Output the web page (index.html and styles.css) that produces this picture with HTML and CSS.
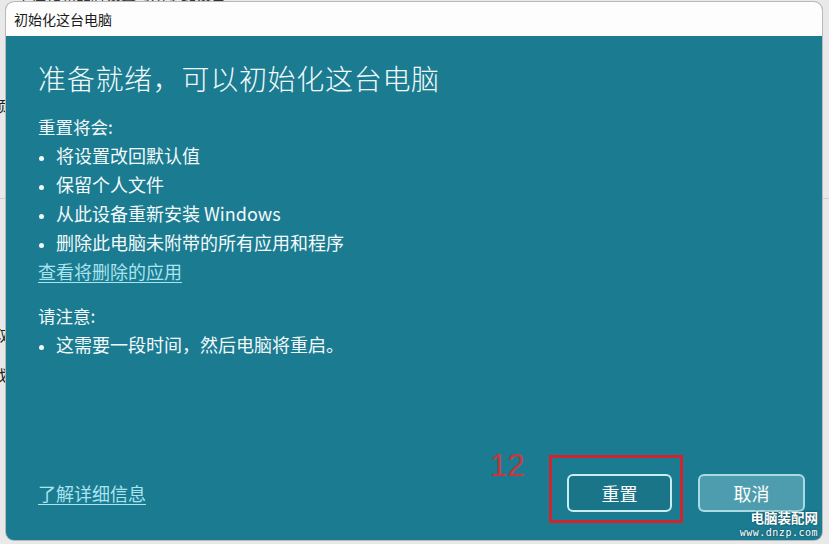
FILE: index.html
```html
<!DOCTYPE html>
<html>
<head>
  <title>初始化这台电脑</title>
  <link rel="stylesheet" href="styles.css">
</head>
<body>
  <div class="backdrop">
    <p class="back-line back-top">个性化和品牌设置可用于此设备</p>
    <p class="back-line back-a">项</p>
    <div class="back-rule"></div>
    <p class="back-line back-b">取</p>
    <p class="back-line back-c">找</p>
  </div>

  <div class="dialog">
    <div class="titlebar">初始化这台电脑</div>
    <div class="content">
      <h1 class="heading">准备就绪，可以初始化这台电脑</h1>
      <p class="text">重置将会:</p>
      <ul class="bullets">
        <li>将设置改回默认值</li>
        <li>保留个人文件</li>
        <li>从此设备重新安装 Windows</li>
        <li>删除此电脑未附带的所有应用和程序</li>
      </ul>
      <a class="link" href="#">查看将删除的应用</a>

      <p class="text note">请注意:</p>
      <ul class="bullets">
        <li>这需要一段时间，然后电脑将重启。</li>
      </ul>

      <div class="footer">
        <a class="link" href="#">了解详细信息</a>
        <div class="buttons">
          <div class="marked">
            <span class="mark-num">12</span>
            <span class="mark-box"></span>
            <button class="btn">重置</button>
          </div>
          <button class="btn btn-cancel">取消</button>
        </div>
      </div>
    </div>
    <div class="watermark">
      <span class="wm-name">电脑装配网</span>
      <span class="wm-url">www.dnzp.com</span>
    </div>
  </div>
</body>
</html>
```

FILE: styles.css
```css
body{
  margin: 0;
  width: 829px;
  height: 544px;
  overflow: hidden;
  background-color: #e9e9e9;
  font-family: "Noto Sans CJK SC", "Noto Sans", sans-serif;
  position: relative;
}

.backdrop{
  display: flex;
  flex-direction: column;
  color: #222;
  font-size: 15px;
}

.back-line{
  margin: 0;
  line-height: 20px;
}

.back-top{
  margin-top: -16px;
  padding-left: 16px;
  color: #333;
}

.back-a{
  margin-top: 92px;
  margin-left: -7px;
}

.back-rule{
  height: 1px;
  background-color: #cfcfcf;
  margin-top: 82px;
}

.back-b{
  margin-top: 126px;
  margin-left: -7px;
}

.back-c{
  margin-top: 20px;
  margin-left: -7px;
}

/* dialog sits over the page behind it */
.dialog{
  position: absolute;
  left: 6px;
  top: 2px;
  width: 816px;
  height: 538px;
  display: flex;
  flex-direction: column;
  border-radius: 8px;
  overflow: hidden;
  box-shadow: 0 0 0 1px #b9b9b9;
  background-color: #1b7b91;
}

.titlebar{
  height: 34px;
  flex-shrink: 0;
  background-color: #fdfdfd;
  color: #1b1b1b;
  font-size: 14px;
  line-height: 34px;
  padding-left: 8px;
}

.content{
  flex: 1;
  display: flex;
  flex-direction: column;
  align-items: flex-start;
  padding: 24px 17px 28px 32px;
  color: #f2fafb;
}

.heading{
  margin: 0 0 16px;
  font-size: 28px;
  line-height: 36px;
  font-weight: 300;
  letter-spacing: 0.7px;
}

.text{
  margin: 0;
  font-size: 17.5px;
  line-height: 29px;
}

.note{
  margin-top: 15px;
}

.bullets{
  list-style: none;
  margin: 0;
  padding: 0;
  font-size: 18px;
  line-height: 29px;
}

.bullets li::before{
  content: "";
  display: inline-block;
  width: 5px;
  height: 5px;
  margin: 0 12px 0 1px;
  border-radius: 50%;
  background-color: currentColor;
  vertical-align: middle;
}

.link{
  color: #a9e4ef;
  font-size: 18px;
  line-height: 29px;
  text-decoration: underline;
  text-underline-offset: 3px;
}

.footer{
  margin-top: auto;
  align-self: stretch;
  display: flex;
  align-items: center;
  justify-content: space-between;
}

.buttons{
  display: flex;
  gap: 26px;
}

.btn{
  width: 105px;
  height: 38px;
  border: 2px solid #c6eef4;
  border-radius: 6px;
  background-color: #1a7589;
  color: #ffffff;
  font-family: "Noto Sans CJK SC", sans-serif;
  font-size: 18px;
  cursor: pointer;
}

.btn-cancel{
  width: 107px;
  background-color: #4d9dae;
  border-color: #a9dbe4;
}

.marked{
  position: relative;
  display: flex;
}

.mark-box{
  position: absolute;
  top: -19px;
  left: -18px;
  right: -11px;
  bottom: -11px;
  border: 3px solid #d0252f;
}

.mark-num{
  position: absolute;
  left: -77px;
  top: -25px;
  color: #c9363d;
  font-family: "Liberation Sans", sans-serif;
  font-size: 31px;
  line-height: 34px;
}

.watermark{
  position: absolute;
  right: 4px;
  bottom: 1px;
  display: flex;
  flex-direction: column;
  align-items: flex-end;
  color: #ffffff;
  text-shadow: 0 0 2px #0c3a46;
}

.wm-name{
  font-size: 13.5px;
  line-height: 19px;
  font-weight: 700;
}

.wm-url{
  font-family: "DejaVu Sans Mono", monospace;
  font-size: 10px;
  line-height: 12px;
  letter-spacing: 0.5px;
}
```
